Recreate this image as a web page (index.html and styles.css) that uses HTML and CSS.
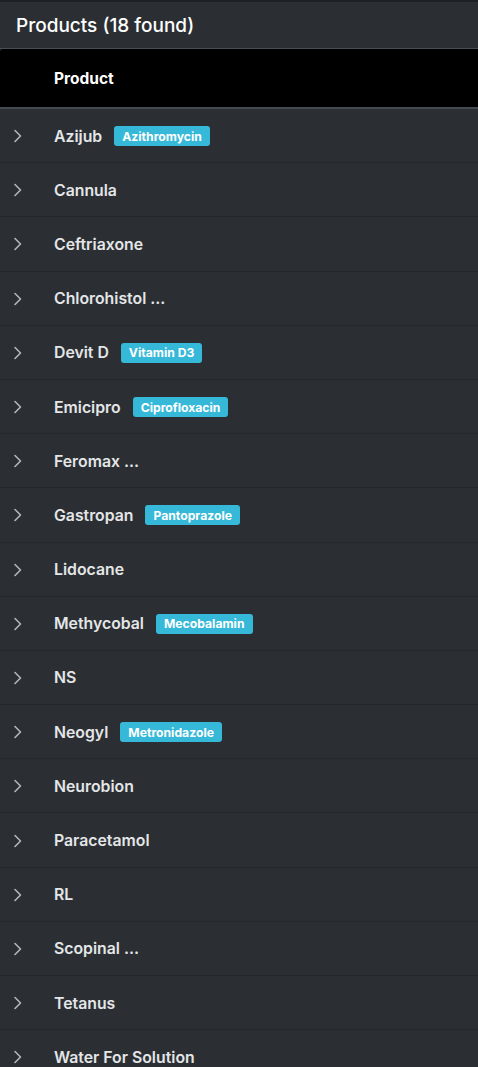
FILE: index.html
```html
<!DOCTYPE html>
<html>
<head>
<meta charset="utf-8">
<link rel="stylesheet" href="styles.css">
</head>
<body>
<div class="top-strip"></div>
<div class="title-bar">Products (18 found)</div>
<div class="table">
  <div class="head-row"><span class="head-cell">Product</span></div>
  <div class="row"><svg class="chev" viewBox="0 0 10 14"><path d="M2 1.5 L7.5 7 L2 12.5"/></svg><span class="name">Azijub</span><span class="badge">Azithromycin</span></div>
  <div class="row"><svg class="chev" viewBox="0 0 10 14"><path d="M2 1.5 L7.5 7 L2 12.5"/></svg><span class="name">Cannula</span></div>
  <div class="row"><svg class="chev" viewBox="0 0 10 14"><path d="M2 1.5 L7.5 7 L2 12.5"/></svg><span class="name">Ceftriaxone</span></div>
  <div class="row"><svg class="chev" viewBox="0 0 10 14"><path d="M2 1.5 L7.5 7 L2 12.5"/></svg><span class="name">Chlorohistol ...</span></div>
  <div class="row"><svg class="chev" viewBox="0 0 10 14"><path d="M2 1.5 L7.5 7 L2 12.5"/></svg><span class="name">Devit D</span><span class="badge">Vitamin D3</span></div>
  <div class="row"><svg class="chev" viewBox="0 0 10 14"><path d="M2 1.5 L7.5 7 L2 12.5"/></svg><span class="name">Emicipro</span><span class="badge">Ciprofloxacin</span></div>
  <div class="row"><svg class="chev" viewBox="0 0 10 14"><path d="M2 1.5 L7.5 7 L2 12.5"/></svg><span class="name">Feromax ...</span></div>
  <div class="row"><svg class="chev" viewBox="0 0 10 14"><path d="M2 1.5 L7.5 7 L2 12.5"/></svg><span class="name">Gastropan</span><span class="badge">Pantoprazole</span></div>
  <div class="row"><svg class="chev" viewBox="0 0 10 14"><path d="M2 1.5 L7.5 7 L2 12.5"/></svg><span class="name">Lidocane</span></div>
  <div class="row"><svg class="chev" viewBox="0 0 10 14"><path d="M2 1.5 L7.5 7 L2 12.5"/></svg><span class="name">Methycobal</span><span class="badge">Mecobalamin</span></div>
  <div class="row"><svg class="chev" viewBox="0 0 10 14"><path d="M2 1.5 L7.5 7 L2 12.5"/></svg><span class="name">NS</span></div>
  <div class="row"><svg class="chev" viewBox="0 0 10 14"><path d="M2 1.5 L7.5 7 L2 12.5"/></svg><span class="name">Neogyl</span><span class="badge">Metronidazole</span></div>
  <div class="row"><svg class="chev" viewBox="0 0 10 14"><path d="M2 1.5 L7.5 7 L2 12.5"/></svg><span class="name">Neurobion</span></div>
  <div class="row"><svg class="chev" viewBox="0 0 10 14"><path d="M2 1.5 L7.5 7 L2 12.5"/></svg><span class="name">Paracetamol</span></div>
  <div class="row"><svg class="chev" viewBox="0 0 10 14"><path d="M2 1.5 L7.5 7 L2 12.5"/></svg><span class="name">RL</span></div>
  <div class="row"><svg class="chev" viewBox="0 0 10 14"><path d="M2 1.5 L7.5 7 L2 12.5"/></svg><span class="name">Scopinal ...</span></div>
  <div class="row"><svg class="chev" viewBox="0 0 10 14"><path d="M2 1.5 L7.5 7 L2 12.5"/></svg><span class="name">Tetanus</span></div>
  <div class="row"><svg class="chev" viewBox="0 0 10 14"><path d="M2 1.5 L7.5 7 L2 12.5"/></svg><span class="name">Water For Solution</span></div>
</div>
</body>
</html>
```
FILE: styles.css
```css
html, body {
  margin: 0;
  padding: 0;
  background: #2b2f33;
  font-family: Inter, "Liberation Sans", sans-serif;
  color: #e6e8ea;
  overflow: hidden;
}
.top-strip {
  height: 2px;
  background: #1e2124;
}
.title-bar {
  height: 47px;
  box-sizing: border-box;
  padding-left: 16px;
  padding-top: 1px;
  display: flex;
  align-items: center;
  font-size: 19px;
  font-weight: 500;
  color: #ffffff;
  border-bottom: 1px solid #4a4f55;
}
.table {
  display: flex;
  flex-direction: column;
}
.head-row {
  height: 60px;
  box-sizing: border-box;
  background: #000000;
  border-bottom: 2.5px solid #454a50;
  border-top-left-radius: 3px;
  display: flex;
  align-items: center;
  padding-left: 54px;
  padding-top: 1px;
}
.head-cell {
  font-size: 15.5px;
  font-weight: 700;
  color: #ffffff;
}
.row {
  height: 54.2px;
  flex: none;
  box-sizing: border-box;
  border-bottom: 1px solid #24272b;
  display: flex;
  align-items: center;
  padding-left: 13px;
  padding-top: 1px;
}
.chev {
  width: 10px;
  height: 14px;
  flex: none;
  margin-right: 31px;
  fill: none;
  stroke: #b3b6ba;
  stroke-width: 1.6;
  stroke-linecap: round;
  stroke-linejoin: round;
}
.name {
  font-size: 15.8px;
  font-weight: 600;
  color: #e4e6e8;
}
.badge {
  margin-left: 12px;
  height: 20px;
  display: inline-flex;
  align-items: center;
  padding: 0 8px;
  border-radius: 3px;
  background: #36b8d8;
  color: #ffffff;
  font-size: 12.2px;
  font-weight: 700;
}
```
